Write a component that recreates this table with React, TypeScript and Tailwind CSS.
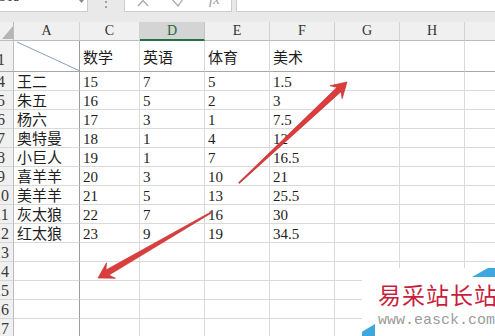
import React from "react";

const serif = "font-['Liberation_Serif','Noto_Sans_CJK_SC',serif]";

const columns = [
  { label: "A", width: "w-[66px]" },
  { label: "C", width: "w-[60px]" },
  { label: "D", width: "w-[65px]" },
  { label: "E", width: "w-[65px]" },
  { label: "F", width: "w-[65px]" },
  { label: "G", width: "w-[65px]" },
  { label: "H", width: "w-[65px]" },
  { label: "I", width: "w-[65px]" },
];

const data: string[][] = [
  ["王二", "15", "7", "5", "1.5"],
  ["朱五", "16", "5", "2", "3"],
  ["杨六", "17", "3", "1", "7.5"],
  ["奥特曼", "18", "1", "4", "12"],
  ["小巨人", "19", "1", "7", "16.5"],
  ["喜羊羊", "20", "3", "10", "21"],
  ["美羊羊", "21", "5", "13", "25.5"],
  ["灰太狼", "22", "7", "16", "30"],
  ["红太狼", "23", "9", "19", "34.5"],
];

// rows 4..17 (rows 2 and 3 are hidden)
const bodyRows = Array.from({ length: 14 }, (_, i) => ({
  num: i + 4,
  cells: data[i] ?? [],
}));

function RowHeader({ num, tall }: { num: number; tall?: boolean }) {
  return (
    <div
      className={`w-[14px] shrink-0 overflow-hidden bg-[#f0f0f0] border-r border-[#bcbcbc] flex ${
        tall ? "h-[31px] items-end pb-[2px] border-b border-b-[#a8a8a8]" : "h-[19px] items-center border-b border-b-[#d6d6d6]"
      }`}
    >
      <div className="w-[26px] ml-[-12px] shrink-0 text-center text-[16px] leading-[19px] text-[#3a3a3a]">{num}</div>
    </div>
  );
}

function FormulaBar() {
  return (
    <div className="h-[22px] bg-[#e9e9e9] flex items-start">
      <div className="w-[88px] h-[12px] bg-white border-b border-r border-[#cdcdcd] relative overflow-hidden">
        <span className="block ml-[-3px] mt-[-10px] text-[13px] leading-[14px] text-[#222]">D18</span>
        <svg className="absolute right-[3px] top-0" width="5" height="5" viewBox="0 0 5 5">
          <path d="M0 0 L5 0 L2.5 3 Z" fill="#8a8a8a" />
        </svg>
      </div>
      <div className="w-[36px] flex justify-center">
        <div className="flex flex-col gap-[3px] pt-[1px]">
          <span className="w-[2px] h-[2px] bg-[#a0a0a0]" />
          <span className="w-[2px] h-[2px] bg-[#a0a0a0]" />
        </div>
      </div>
      <div className="w-[108px] h-[12px] bg-white border-b border-x border-[#cdcdcd] relative overflow-hidden">
        <svg className="absolute left-0 top-0" width="108" height="12" viewBox="0 0 108 12">
          <path d="M13 -5 L23 6 M23 -5 L13 6" stroke="#a8a8a8" strokeWidth="1.3" fill="none" />
          <path d="M46 -2 L53 6 L60 -4" stroke="#a8a8a8" strokeWidth="1.3" fill="none" />
        </svg>
        <span className="absolute left-[84px] top-[-9px] italic text-[15px] leading-[16px] text-[#9a9a9a]">fx</span>
      </div>
      <div className="w-[4px]" />
      <div className="flex-1 h-[12px] bg-white border-b border-l border-[#cdcdcd]" />
    </div>
  );
}

function Arrows() {
  return (
    <svg className="absolute left-0 top-0 pointer-events-none" width="495" height="336" viewBox="0 0 495 336">
      <polygon
        points="347,82 342.2,98.8 341,91.7 239.4,183.4 238.6,182.6 337,87.3 329.9,85.7"
        fill="#dc3c3c"
        stroke="#b82c2c"
        strokeWidth="0.6"
        strokeLinejoin="round"
      />
      <polygon
        points="98,278 115.5,278.3 109,275.1 212.3,212.5 211.7,211.5 106,269.9 106.5,262.7"
        fill="#dc3c3c"
        stroke="#b82c2c"
        strokeWidth="0.6"
        strokeLinejoin="round"
      />
    </svg>
  );
}

function Watermark() {
  return (
    <div className="absolute left-[362px] top-[268px] w-[133px] h-[68px] bg-white">
      <svg className="absolute left-0 top-0" width="133" height="68" viewBox="0 0 133 68">
        <polygon points="110,9 133,-4 133,9" fill="#3ea8de" />
        <polygon points="-7,68 13,56 13,68" fill="#3ea8de" />
      </svg>
      <div className="relative pl-[16px] pt-[14px]">
        <div className="text-[23px] leading-[24px] tracking-[1px] text-[#c81e3c] font-['Noto_Sans_CJK_SC',sans-serif] whitespace-nowrap">
          易采站长站
        </div>
        <div className="mt-[8px] text-[15px] leading-[14px] text-[#9c9c9c] font-['Liberation_Mono',monospace] whitespace-nowrap">
          www.easck.com
        </div>
      </div>
    </div>
  );
}

export default function App() {
  return (
    <div className={`w-[495px] h-[336px] overflow-hidden relative bg-white ${serif}`}>
      <FormulaBar />

      {/* column headers */}
      <div className="flex h-[19px]">
        <div className="w-[14px] shrink-0 bg-[#f0f0f0] border-r border-b border-[#bcbcbc] relative">
          <svg className="absolute left-0 top-0" width="14" height="19" viewBox="0 0 14 19">
            <polygon points="13,4 13,17 2,17" fill="#b5b5b5" />
          </svg>
        </div>
        {columns.map((c) =>
          c.label === "D" ? (
            <div
              key={c.label}
              className={`${c.width} shrink-0 bg-[#d4d4d4] border-r border-[#c4c4c4] border-b-2 border-b-[#217346] text-center text-[14px] leading-[18px] text-[#1e6b3c]`}
            >
              {c.label}
            </div>
          ) : (
            <div
              key={c.label}
              className={`${c.width} shrink-0 bg-[#f0f0f0] border-r border-[#d2d2d2] border-b border-b-[#bcbcbc] text-center text-[14px] leading-[18px] text-[#333]`}
            >
              {c.label}
            </div>
          )
        )}
      </div>

      {/* row 1 (headers of the table) */}
      <div className="flex h-[31px]">
        <RowHeader num={1} tall />
        {columns.map((c, i) => (
          <div
            key={c.label}
            className={`${c.width} shrink-0 h-[31px] border-b border-b-[#a8a8a8] ${
              i === 0 ? "border-r border-r-[#9c9c9c] relative" : "border-r border-r-[#dadada]"
            } flex items-end pl-[3px] pb-[3px] text-[15px] leading-[19px] text-[#1d1d1d] whitespace-nowrap`}
          >
            {i === 0 && (
              <svg className="absolute left-0 top-0" width="66" height="31" viewBox="0 0 66 31">
                <line x1="3" y1="1" x2="66" y2="30" stroke="#8b9db3" strokeWidth="1" />
              </svg>
            )}
            {["", "数学", "英语", "体育", "美术", "", "", ""][i]}
          </div>
        ))}
      </div>

      {bodyRows.map((r) => (
        <div key={r.num} className="flex h-[19px]">
          <RowHeader num={r.num} />
          {columns.map((c, i) => (
            <div
              key={c.label}
              className={`${c.width} shrink-0 h-[19px] border-b border-b-[#dadada] ${
                i === 0 ? "border-r border-r-[#9c9c9c]" : "border-r border-r-[#dadada]"
              } pl-[3px] pt-[1px] text-[15px] leading-[18px] text-[#1d1d1d] whitespace-nowrap overflow-hidden`}
            >
              {r.cells[i] ?? ""}
            </div>
          ))}
        </div>
      ))}

      <Arrows />
      <Watermark />
    </div>
  );
}
